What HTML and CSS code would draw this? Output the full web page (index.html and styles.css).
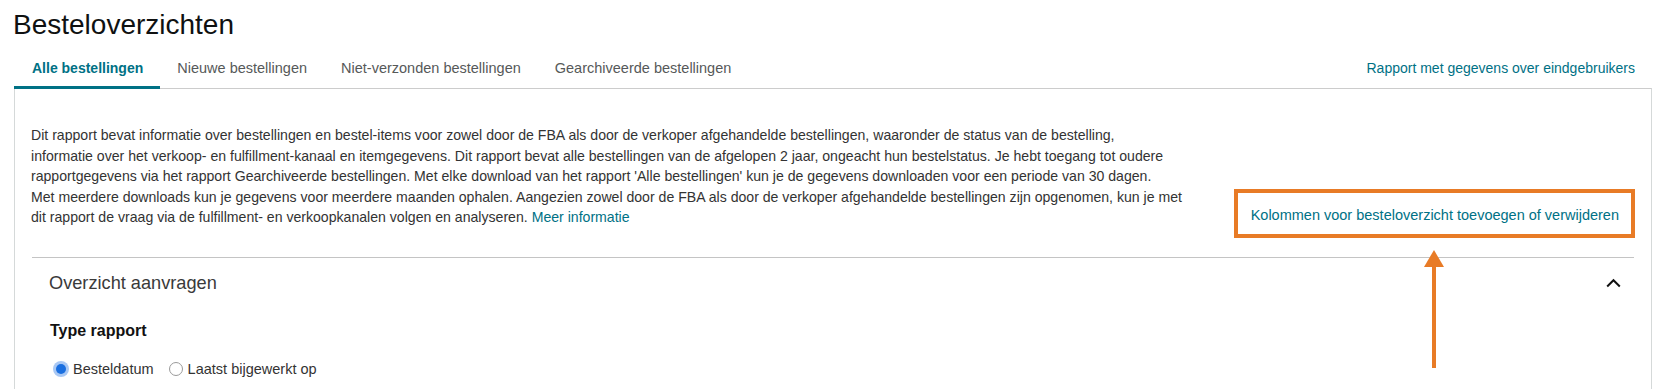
FILE: index.html
```html
<!DOCTYPE html>
<html lang="nl">
<head>
<meta charset="utf-8">
<title>Besteloverzichten</title>
<link rel="stylesheet" href="styles.css">
</head>
<body>
<div class="page">
  <h1 class="title">Besteloverzichten</h1>
  <nav class="tabs">
    <a class="tab active">Alle bestellingen</a>
    <a class="tab">Nieuwe bestellingen</a>
    <a class="tab">Niet-verzonden bestellingen</a>
    <a class="tab">Gearchiveerde bestellingen</a>
    <a class="tab tab-link">Rapport met gegevens over eindgebruikers</a>
  </nav>
  <div class="panel">
    <div class="intro">
      <p class="intro-text">Dit rapport bevat informatie over bestellingen en bestel-items voor zowel door de FBA als door de verkoper afgehandelde bestellingen, waaronder de status van de bestelling,<br>informatie over het verkoop- en fulfillment-kanaal en itemgegevens. Dit rapport bevat alle bestellingen van de afgelopen 2 jaar, ongeacht hun bestelstatus. Je hebt toegang tot oudere<br>rapportgegevens via het rapport Gearchiveerde bestellingen. Met elke download van het rapport 'Alle bestellingen' kun je de gegevens downloaden voor een periode van 30 dagen.<br>Met meerdere downloads kun je gegevens voor meerdere maanden ophalen. Aangezien zowel door de FBA als door de verkoper afgehandelde bestellingen zijn opgenomen, kun je met<br>dit rapport de vraag via de fulfillment- en verkoopkanalen volgen en analyseren. <a class="link">Meer informatie</a></p>
      <div class="highlight"><a class="link">Kolommen voor besteloverzicht toevoegen of verwijderen</a></div>
    </div>
    <div class="divider"></div>
    <div class="section-head">
      <h2 class="section-title">Overzicht aanvragen</h2>
      <svg class="chevron" width="15" height="10" viewBox="0 0 15 10"><polyline points="1.2,8.5 7.5,2.2 13.8,8.5" fill="none" stroke="#111" stroke-width="2"/></svg>
    </div>
    <div class="field-label">Type rapport</div>
    <div class="radios">
      <label class="radio"><span class="dot checked"></span>Besteldatum</label>
      <label class="radio"><span class="dot"></span>Laatst bijgewerkt op</label>
    </div>
  </div>
  <svg class="arrow" width="20" height="120" viewBox="0 0 20 120"><polygon points="10,0 20,17 0,17" fill="#e87b26"/><rect x="8" y="14" width="4" height="104" fill="#e87b26"/></svg>
</div>
</body>
</html>
```
FILE: styles.css
```css
html, body {
  margin: 0;
  padding: 0;
  background: #fff;
}
body {
  font-family: "Liberation Sans", Arial, sans-serif;
  color: #0f1111;
  overflow: hidden;
}
.page {
  position: relative;
  padding: 8px 12px 0 14px;
}
.title {
  margin: 0 0 5px -1px;
  font-size: 28px;
  font-weight: 400;
  line-height: 34px;
  color: #0f1111;
}
.tabs {
  display: flex;
  height: 41px;
}
.tab {
  display: flex;
  align-items: center;
  padding: 0 17px;
  font-size: 14.5px;
  line-height: 20px;
  color: #565959;
  position: relative;
  white-space: nowrap;
}
.tab.active {
  font-size: 14px;
  font-weight: 700;
  color: #007185;
  padding: 0 17px 0 18px;
}
.tab.active::after {
  content: "";
  position: absolute;
  left: 0;
  right: 0;
  bottom: -1px;
  height: 3px;
  background: #007185;
  z-index: 2;
}
.tab-link {
  margin-left: auto;
  color: #007185;
  font-size: 14px;
}
.panel {
  border: 1px solid #d5d9d9;
  border-top-color: #cccccc;
  padding: 0 16px;
  height: 400px;
}
.intro {
  display: flex;
  justify-content: space-between;
  align-items: flex-end;
  padding-top: 36px;
  margin-bottom: 19px;
}
.intro-text {
  margin: 0 0 10px 0;
  font-size: 14.1px;
  line-height: 20.5px;
  color: #333;
  white-space: nowrap;
}
.link {
  color: #007185;
}
.highlight {
  border: 4px solid #e87b26;
  padding: 12px 12px 9px 13px;
  font-size: 14.5px;
  line-height: 20px;
  white-space: nowrap;
}
.divider {
  border-top: 1px solid #c4c4c4;
  margin: 0 1px;
}
.section-head {
  display: flex;
  justify-content: space-between;
  align-items: center;
  padding: 13px 14px 0 18px;
}
.section-title {
  margin: 0;
  font-size: 18.2px;
  font-weight: 400;
  line-height: 24px;
  color: #3a3a3a;
}
.chevron {
  display: block;
}
.field-label {
  margin: 26px 0 0 19px;
  font-size: 16px;
  font-weight: 700;
  line-height: 20px;
  color: #111;
}
.radios {
  display: flex;
  margin: 18px 0 0 20px;
  font-size: 14.5px;
  line-height: 20px;
  color: #333;
}
.radio {
  display: flex;
  align-items: center;
  margin-right: 15px;
}
.dot {
  width: 14px;
  height: 14px;
  border: 1px solid #9a9a9a;
  border-radius: 50%;
  margin: 0 5px 0 0;
  box-sizing: border-box;
}
.dot.checked {
  width: 10px;
  height: 10px;
  border: none;
  background: #1a6fe0;
  box-shadow: 0 0 0 3px #a9c8f4;
  margin: 0 7px 0 5px;
}
.arrow {
  position: absolute;
  left: 1424px;
  top: 250px;
}
```
